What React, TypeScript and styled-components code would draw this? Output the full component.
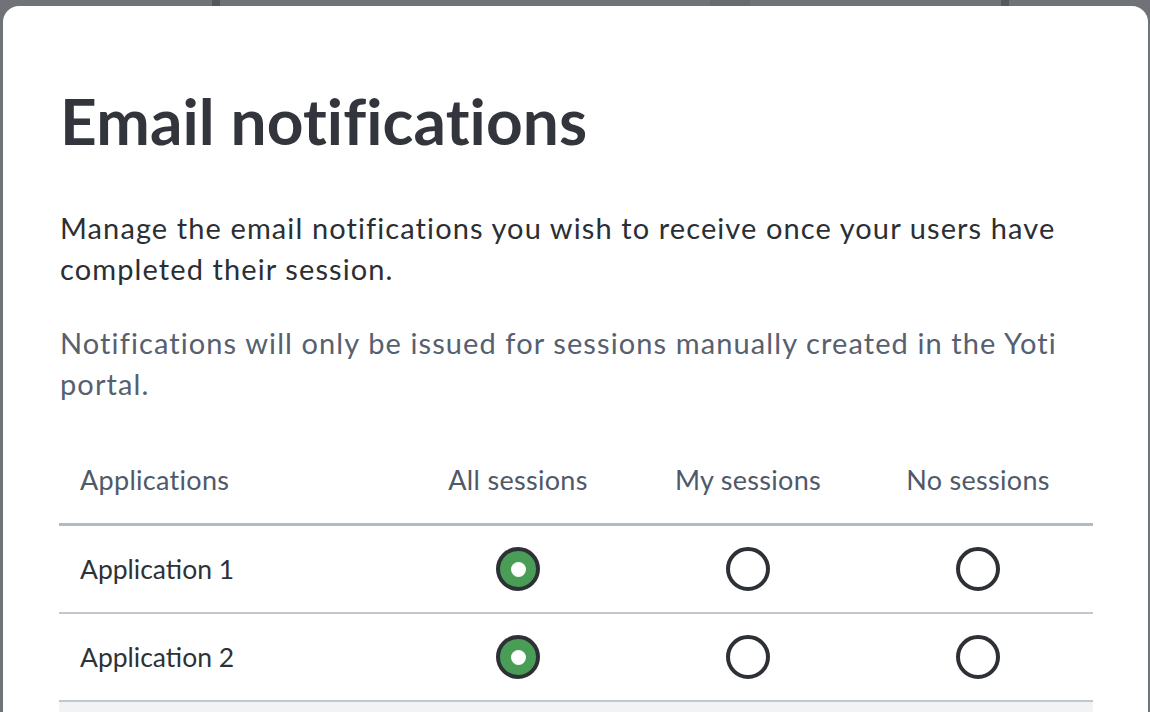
import React, { useState } from "react";
import styled, { createGlobalStyle } from "styled-components";

const GlobalStyle = createGlobalStyle`
  html, body {
    margin: 0;
    padding: 0;
    height: 100%;
    overflow: hidden;
  }
  body {
    font-family: Lato, "Liberation Sans", sans-serif;
    -webkit-font-smoothing: antialiased;
  }
  #root {
    height: 100%;
  }
`;

// the page behind the dialog shows through as a dim strip with a few marks
const Backdrop = styled.div`
  display: flex;
  height: 100%;
  box-sizing: border-box;
  padding: 6px 2px 0 3px;
  background-color: #6f7276;
  background-image: linear-gradient(#54575b, #54575b),
    linear-gradient(#54575b, #54575b), linear-gradient(#686b6f, #686b6f);
  background-size: 8px 6px, 8px 6px, 40px 6px;
  background-position: 212px 0, 1001px 0, 710px 0;
  background-repeat: no-repeat;
`;

const Modal = styled.div`
  flex: 1;
  background: #ffffff;
  border-radius: 16px 16px 0 0;
  padding: 81px 55px 0 56px;
  box-sizing: border-box;
  overflow: hidden;
`;

const Title = styled.h1`
  margin: 0 0 53px 1px;
  font-size: 64px;
  line-height: 67px;
  font-weight: 700;
  color: #32363c;
  letter-spacing: 0.1px;
`;

const Paragraph = styled.p<{ $muted?: boolean }>`
  margin: 0 0 33px 1px;
  font-size: 29px;
  line-height: 41px;
  letter-spacing: 1.1px;
  color: ${(p) => (p.$muted ? "#56606f" : "#2b2f34")};
`;

const Table = styled.div`
  display: grid;
  grid-template-columns: 1fr repeat(3, 230px);
  margin-top: 27px;
`;

const HeaderCell = styled.div<{ $first?: boolean }>`
  padding: 28px ${(p) => (p.$first ? "0 28px 21px" : "0 28px 0")};
  font-size: 27px;
  line-height: 30px;
  letter-spacing: 0.3px;
  color: #4f5969;
  text-align: ${(p) => (p.$first ? "left" : "center")};
  border-bottom: 3px solid #b4bac4;
`;

const Cell = styled.div<{ $first?: boolean }>`
  display: flex;
  align-items: center;
  justify-content: ${(p) => (p.$first ? "flex-start" : "center")};
  height: 86px;
  padding-left: ${(p) => (p.$first ? "21px" : "0")};
  font-size: 26.5px;
  color: #2e3237;
  border-bottom: 2px solid #c2c6cd;
`;

const FooterRow = styled.div`
  grid-column: 1 / -1;
  height: 40px;
  background: #f2f3f5;
`;

const Radio = styled.button<{ $checked?: boolean }>`
  display: flex;
  align-items: center;
  justify-content: center;
  width: 44px;
  height: 44px;
  padding: 0;
  border-radius: 50%;
  border: 4px solid #2d3136;
  background: ${(p) => (p.$checked ? "#4a9d57" : "#ffffff")};
  box-sizing: border-box;
  cursor: pointer;
`;

const Dot = styled.span`
  width: 15px;
  height: 15px;
  border-radius: 50%;
  background: #ffffff;
`;

type Choice = "all" | "mine" | "none";

const columns: { key: Choice; label: string }[] = [
  { key: "all", label: "All sessions" },
  { key: "mine", label: "My sessions" },
  { key: "none", label: "No sessions" }
];

const App = () => {
  const [choices, setChoices] = useState<Record<string, Choice>>({
    "Application 1": "all",
    "Application 2": "all"
  });

  return (
    <>
      <GlobalStyle />
      <Backdrop>
        <Modal>
          <Title>Email notifications</Title>
          <Paragraph>
            Manage the email notifications you wish to receive once your users
            have completed their session.
          </Paragraph>
          <Paragraph $muted>
            Notifications will only be issued for sessions manually created in
            the Yoti portal.
          </Paragraph>
          <Table>
            <HeaderCell $first>Applications</HeaderCell>
            {columns.map((c) => (
              <HeaderCell key={c.key}>{c.label}</HeaderCell>
            ))}
            {Object.keys(choices).map((app) => (
              <React.Fragment key={app}>
                <Cell $first>{app}</Cell>
                {columns.map((c) => (
                  <Cell key={c.key}>
                    <Radio
                      $checked={choices[app] === c.key}
                      aria-label={`${app} ${c.label}`}
                      onClick={() =>
                        setChoices({ ...choices, [app]: c.key })
                      }
                    >
                      {choices[app] === c.key && <Dot />}
                    </Radio>
                  </Cell>
                ))}
              </React.Fragment>
            ))}
            <FooterRow />
          </Table>
        </Modal>
      </Backdrop>
    </>
  );
};

export default App;
